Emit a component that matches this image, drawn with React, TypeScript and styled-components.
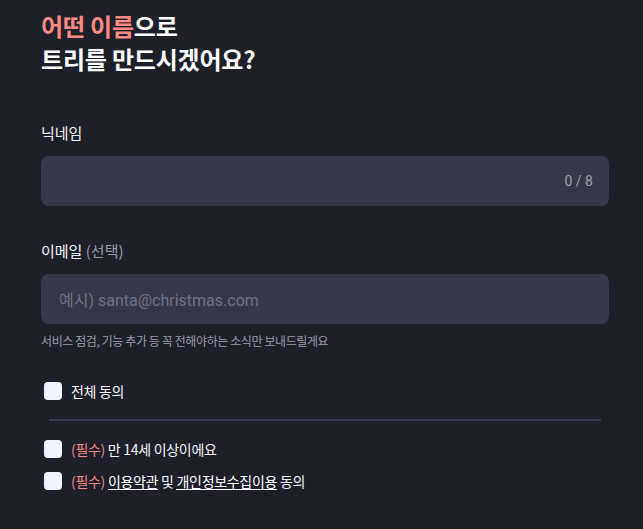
import styled, {createGlobalStyle} from 'styled-components';

const GlobalStyle = createGlobalStyle`
  html, body {
    margin: 0;
    padding: 0;
    background: #1e2029;
  }

  body {
    font-family: "Noto Sans CJK KR", "Noto Sans", sans-serif;
    color: #f3f4f8;
  }
`;

export default function App() {
  return (
    <>
      <GlobalStyle/>
      <Page>
        <Title>
          <Accent>어떤 이름</Accent>으로<br/>
          트리를 만드시겠어요?
        </Title>

        {/* 닉네임 */}
        <Field $top={47}>
          <Label>닉네임</Label>
          <InputBox>
            <Counter>0 / 8</Counter>
          </InputBox>
        </Field>

        {/* 이메일 */}
        <Field $top={34}>
          <Label>이메일 <Muted>(선택)</Muted></Label>
          <InputBox>
            <Placeholder>예시) santa@christmas.com</Placeholder>
          </InputBox>
          <Helper>서비스 점검, 기능 추가 등 꼭 전해야하는 소식만 보내드릴게요</Helper>
        </Field>

        <Agreements>
          <CheckRow>
            <CheckBox/>
            <span>전체 동의</span>
          </CheckRow>

          <Divider/>

          <CheckRow>
            <CheckBox/>
            <span><Required>(필수)</Required> 만 14세 이상이에요</span>
          </CheckRow>
          <CheckRow $gap={14}>
            <CheckBox/>
            <span>
              <Required>(필수)</Required> <Link>이용약관</Link> 및 <Link>개인정보수집이용</Link> 동의
            </span>
          </CheckRow>
        </Agreements>
      </Page>
    </>
  );
}


const Page = styled.div`
  width: 568px;
  padding: 9px 34px 0 41px;
  display: flex;
  flex-direction: column;
`;

const Title = styled.h1`
  margin: 0;
  font-size: 24px;
  line-height: 33px;
  font-weight: 700;
  color: #ffffff;
  letter-spacing: -0.2px;
`;

const Accent = styled.span`
  color: #ff8a82;
`;

const Field = styled.div<{ $top: number }>`
  margin-top: ${p => p.$top}px;
  display: flex;
  flex-direction: column;
`;

const Label = styled.div`
  font-size: 15px;
  line-height: 22px;
  color: #f3f4f8;
  margin-bottom: 12px;
`;

const Muted = styled.span`
  color: #9a9cab;
`;

const InputBox = styled.div`
  height: 50px;
  border-radius: 8px;
  background: #363849;
  display: flex;
  align-items: center;
  padding: 0 16px 0 18px;
`;

const Counter = styled.span`
  margin-left: auto;
  font-family: Roboto, "Noto Sans CJK KR", sans-serif;
  font-size: 14px;
  color: #9ea0b0;
`;

const Placeholder = styled.span`
  font-family: Roboto, "Noto Sans CJK KR", sans-serif;
  font-size: 16px;
  color: #6f7284;
`;

const Helper = styled.div`
  margin-top: 8px;
  font-size: 12px;
  line-height: 17px;
  color: #9a9cab;
  letter-spacing: -0.4px;
`;

const Agreements = styled.div`
  margin-top: 33px;
  display: flex;
  flex-direction: column;
  padding-left: 3px;
`;

const CheckRow = styled.div<{ $gap?: number }>`
  display: flex;
  align-items: center;
  gap: 9px;
  height: 18px;
  margin-top: ${p => p.$gap ?? 0}px;
  font-size: 14px;
  color: #f3f4f8;
  letter-spacing: -0.3px;
`;

const CheckBox = styled.span`
  width: 18px;
  height: 18px;
  flex: none;
  border-radius: 4px;
  background: #eff2ff;
`;

const Divider = styled.hr`
  width: 552px;
  margin: 19px 0 19px 5px;
  border: 0;
  height: 2px;
  background: #3a3b4e;
`;

const Required = styled.span`
  color: #f08a82;
`;

const Link = styled.span`
  color: #ffffff;
  display: inline-block;
  line-height: 16px;
  border-bottom: 1px solid #ffffff;
`;
